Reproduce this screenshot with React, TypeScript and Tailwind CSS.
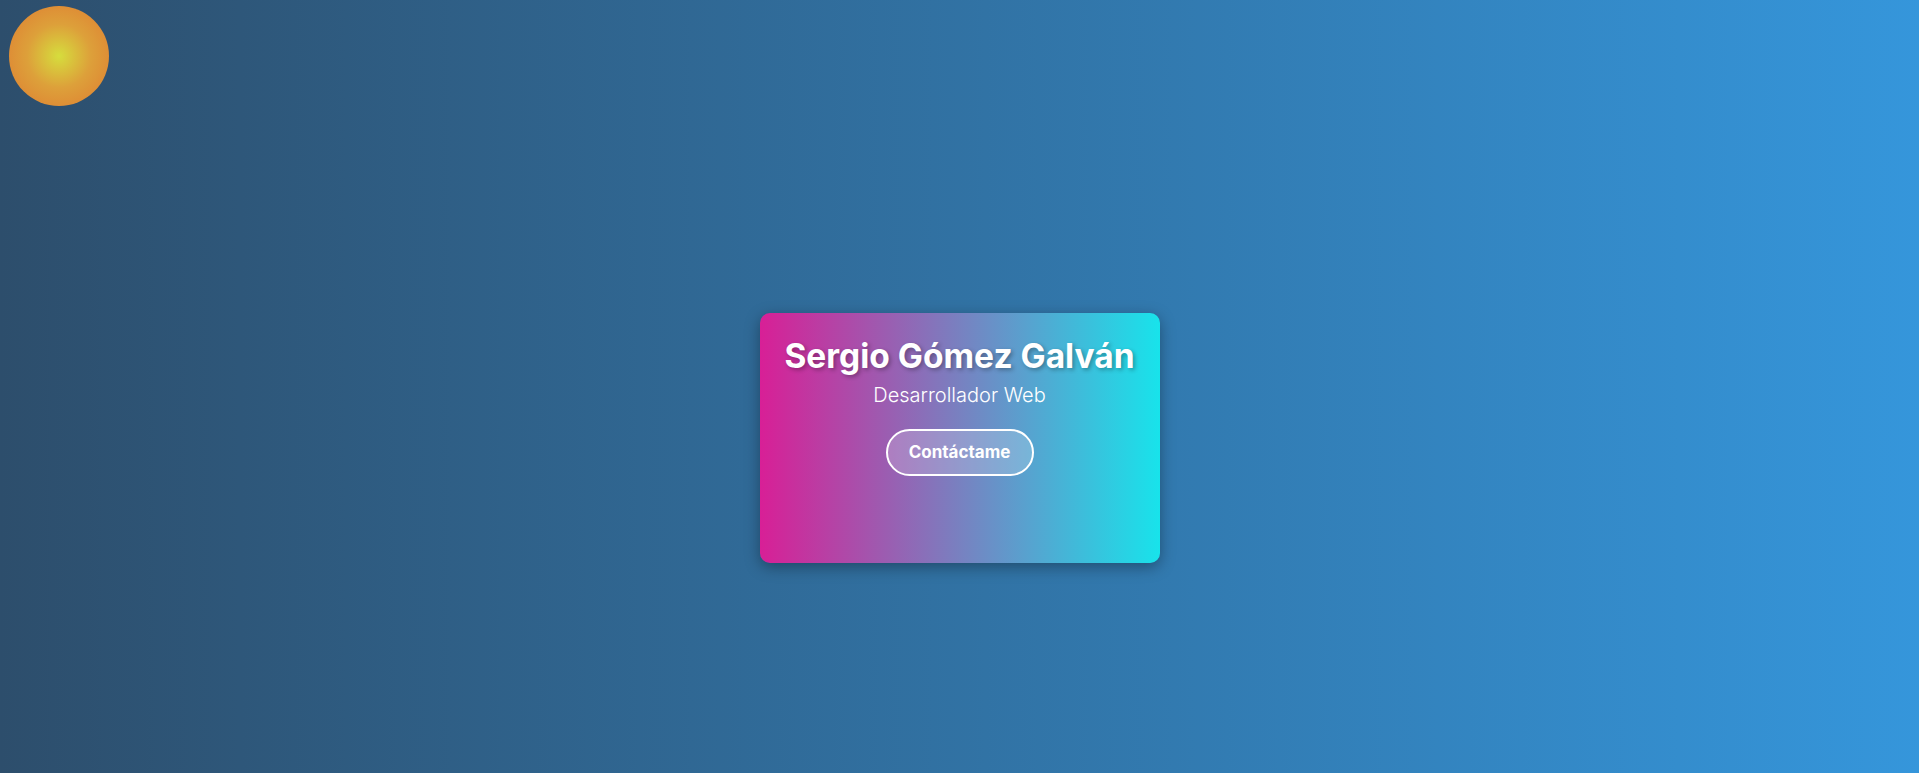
import React from "react";

export default function App() {
  return (
    <div className="flex h-[773px] w-full flex-col overflow-hidden bg-[linear-gradient(to_right,#2d4e6c,#3596db)] font-['Inter',sans-serif]">
      <div className="ml-[9px] mt-[6px] h-[100px] w-[100px] shrink-0 rounded-full bg-[radial-gradient(circle,#d6dd3d_0%,#dda03a_45%,#df7a31_100%)]" />
      <div className="flex flex-1 items-center justify-center pb-[3px]">
        <div className="flex h-[250px] w-[400px] flex-col items-center rounded-[10px] bg-[linear-gradient(to_right,#d81f96,#18e3eb)] pt-[23px] text-white shadow-[0_4px_15px_rgba(0,0,0,0.35)]">
          <h1 className="text-[33.5px] font-bold leading-[40px] [text-shadow:2px_2px_4px_rgba(0,0,0,0.3)]">
            Sergio Gómez Galván
          </h1>
          <p className="mt-[7px] text-[20px] font-light leading-[24px]">Desarrollador Web</p>
          <button className="mt-[22px] flex h-[47px] w-[148px] items-center justify-center rounded-full border-2 border-white bg-white/20 text-[17px] font-bold text-white">
            Contáctame
          </button>
        </div>
      </div>
    </div>
  );
}
